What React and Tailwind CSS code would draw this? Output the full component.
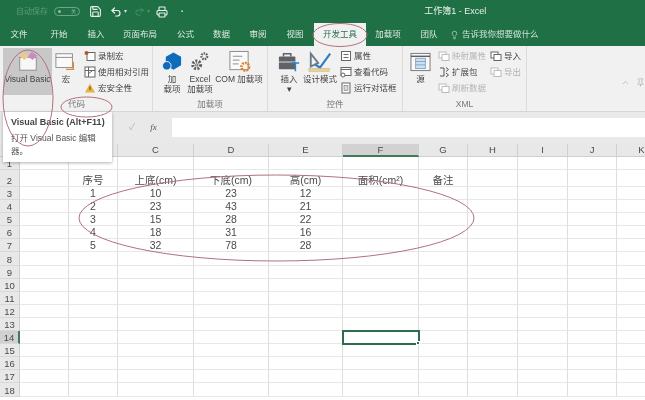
import React from "react";
import { Save, Undo2, Redo2, Printer, Lightbulb, ChevronUp, Pin } from "lucide-react";

const FONT = "font-['Liberation_Sans','Noto_Sans_CJK_SC',sans-serif]";

const tabs = [
  ["文件", "w-[38px]"], ["开始", "w-[42px]"], ["插入", "w-[32px]"], ["页面布局", "w-[56px]"],
  ["公式", "w-[35px]"], ["数据", "w-[37px]"], ["审阅", "w-[36px]"], ["视图", "w-[38px]"],
];

const Box = ({ children, className = "w-[12px] h-[12px]" }) => (
  <svg viewBox="0 0 12 12" className={className + " shrink-0"}>{children}</svg>
);

const IconRecord = () => (
  <Box><rect x="3" y="2.5" width="8" height="8" fill="#fff" stroke="#666" /><circle cx="2.5" cy="3" r="2" fill="#b5562e" /></Box>
);
const IconRelative = () => (
  <Box><rect x="1" y="1" width="10" height="10" fill="#fff" stroke="#666" /><path d="M1 4.5h10M4.5 1v10M4 8l4-3" stroke="#666" fill="none" /></Box>
);
const IconWarn = () => (
  <Box><path d="M6 1.5L11 10.5H1Z" fill="#e8b33a" /><path d="M6 4.5v3.5" stroke="#444" /></Box>
);
const IconProp = ({ c = "#666" }) => (
  <Box><rect x="1.5" y="1.5" width="9" height="9" fill="#fff" stroke={c} /><path d="M3.5 4.5h5M3.5 7.5h5" stroke={c} /></Box>
);
const IconCode = () => (
  <Box><rect x="1" y="1.5" width="10" height="8" fill="#fff" stroke="#666" /><path d="M1 3.5h10" stroke="#666" /><circle cx="3" cy="9" r="2" fill="#fff" stroke="#666" /></Box>
);
const IconDialog = () => (
  <Box><rect x="2" y="1" width="8" height="10" fill="#fff" stroke="#666" /><rect x="4" y="3.5" width="4" height="5" fill="#d8d8d8" stroke="#777" strokeWidth="0.6" /></Box>
);
const IconMap = ({ c = "#bbb" }) => (
  <Box><rect x="1" y="2" width="7" height="6" fill="#fff" stroke={c} /><rect x="4" y="4.5" width="7" height="6" fill="#fff" stroke={c} /></Box>
);
const IconPack = () => (
  <Box><path d="M2 2h4v8H2M8 1.5l2.5 2L8 5.5M8 7l2.5 2L8 11" fill="none" stroke="#555" /></Box>
);

const Small = ({ icon, children, muted }) => (
  <div className={"flex items-center h-[16px] gap-[2px] text-[8.5px] whitespace-nowrap " + (muted ? "text-[#b4b4b4]" : "text-[#444]")}>
    {icon}
    <span>{children}</span>
  </div>
);

const SmallList = ({ className = "", children }) => (
  <div className={"flex flex-col -mt-[1px] " + className}>{children}</div>
);

const Big = ({ w, icon, lines, className = "" }) => (
  <div className={"flex flex-col items-center shrink-0 text-[8.5px] leading-[10px] text-[#444] " + w + " " + className}>
    <div className="h-[25px] flex items-center justify-center">{icon}</div>
    {lines.map((l) => (
      <span key={l} className="whitespace-nowrap">{l}</span>
    ))}
  </div>
);

const Group = ({ w, label, children }) => (
  <div className={"flex flex-col shrink-0 h-full border-r border-[#dcdcdc] " + w}>
    <div className="flex flex-1 pt-[3px]">{children}</div>
    <div className="text-center text-[8.5px] leading-[10px] pb-[2px] text-[#777]">{label}</div>
  </div>
);

const VBIcon = () => (
  <svg viewBox="0 0 26 24" className="w-[24px] h-[22px]">
    <rect x="4" y="8" width="18" height="14" fill="#f7f7f7" stroke="#8a8a8a" />
    <path d="M8 2l6 5-5 4-6-5Z" fill="#efc98c" />
    <path d="M17 2l6 4-5 5-5-4Z" fill="#c78cc0" />
  </svg>
);
const MacroIcon = () => (
  <svg viewBox="0 0 24 24" className="w-[22px] h-[22px]">
    <rect x="1" y="3" width="18" height="15" fill="#fafafa" stroke="#8a8a8a" />
    <path d="M1 7h18" stroke="#8a8a8a" />
    <path d="M20 12v8h-8" fill="none" stroke="#e08a2e" strokeWidth="1.5" />
  </svg>
);
const Hexes = () => (
  <svg viewBox="0 0 22 22" className="w-[21px] h-[22px]">
    <path d="M12 1l8 4.5v9L12 19l-8-4.5v-9Z" fill="#0f6cbd" />
    <circle cx="5" cy="15" r="4.5" fill="#0f6cbd" stroke="#f1f1f1" />
  </svg>
);
const Gears = () => (
  <svg viewBox="0 0 22 24" className="w-[21px] h-[24px]" fill="none" stroke="#5f5f5f">
    <circle cx="15" cy="6" r="3" strokeWidth="2.4" strokeDasharray="1.6 1" />
    <circle cx="7" cy="15" r="4" strokeWidth="3.4" strokeDasharray="2 1.4" />
    <circle cx="7" cy="15" r="1.2" strokeWidth="1" />
  </svg>
);
const ComIcon = () => (
  <svg viewBox="0 0 24 24" className="w-[23px] h-[24px]">
    <rect x="2" y="1" width="19" height="19" fill="#fafafa" stroke="#8a8a8a" />
    <path d="M5 6h10M5 10h7M5 14h6" stroke="#8a8a8a" />
    <circle cx="18" cy="17" r="4" fill="none" stroke="#e0812b" strokeWidth="2.6" strokeDasharray="2 1" />
  </svg>
);
const InsertIcon = () => (
  <svg viewBox="0 0 24 24" className="w-[22px] h-[24px]">
    <rect x="1" y="6" width="18" height="14" rx="1" fill="#5f6266" />
    <path d="M6 6V3h8v3" fill="none" stroke="#5f6266" strokeWidth="1.6" />
    <path d="M1 12h18" stroke="#e8e8e8" />
    <path d="M15 13h8M19 13v9" stroke="#2f7fc1" strokeWidth="1.6" />
  </svg>
);
const DesignIcon = () => (
  <svg viewBox="0 0 26 24" className="w-[24px] h-[24px]">
    <path d="M3 3l8 10L3 17Z" fill="none" stroke="#6b7a88" strokeWidth="2" />
    <path d="M8 15l5 3L24 3" fill="none" stroke="#2f7fc1" strokeWidth="2.4" />
    <rect x="1" y="19" width="22" height="3" fill="#e9cf98" stroke="#c8a868" strokeWidth="0.5" />
  </svg>
);
const SourceIcon = () => (
  <svg viewBox="0 0 22 20" className="w-[21px] h-[20px]">
    <rect x="1" y="1" width="20" height="18" fill="#fafafa" stroke="#777" />
    <path d="M1 4h20" stroke="#555" strokeWidth="1.4" />
    <rect x="6" y="6" width="10" height="11" fill="#cfe0f0" stroke="#5f8db5" strokeWidth="0.7" />
    <path d="M6 9.5h10M6 13h10" stroke="#5f8db5" strokeWidth="0.7" />
  </svg>
);

const data = {
  2: ["序号", "上底(cm)", "下底(cm)", "高(cm)", "面积(cm²)", "备注"],
  3: ["1", "10", "23", "12"],
  4: ["2", "23", "43", "21"],
  5: ["3", "15", "28", "22"],
  6: ["4", "18", "31", "16"],
  7: ["5", "32", "78", "28"],
};
const letters = ["A", "B", "C", "D", "E", "F", "G", "H", "I", "J", "K"];
const rows = Array.from({ length: 18 }, (_, i) => i + 1);

function Sheet() {
  return (
    <div className="grid grid-cols-[20px_49px_49px_76px_75px_74px_76px_49px_50px_50px_49px_50px] grid-rows-[13px_13px_17px_repeat(16,13.1px)] bg-white text-[#4a4a4a] text-[10.5px]">
      <div className="bg-[#e6e6e6] border-b border-[#cfcfcf]" />
      {letters.map((l) => (
        <div
          key={l}
          className={
            "flex items-center justify-center text-[9.5px] leading-none border-r " +
            (l === "F"
              ? "bg-[#d2d2d2] border-b-2 border-b-[#3f7a5a] border-r-[#d0d0d0]"
              : "bg-[#e8e8e8] border-b border-b-[#cfcfcf] border-r-[#d0d0d0]")
          }
        >
          {l === "A" || l === "B" ? "" : l}
        </div>
      ))}
      {rows.map((r) => (
        <React.Fragment key={r}>
          <div
            className={
              "flex items-end justify-center text-[9.5px] leading-[11px] border-b border-[#d8d8d8] " +
              (r === 14 ? "bg-[#d0d0d0] border-r-2 border-r-[#3f7a5a]" : "bg-[#e8e8e8] border-r border-r-[#cfcfcf]")
            }
          >
            {r}
          </div>
          {letters.map((l, i) => {
            const v = data[r] && data[r][i - 1];
            const active = r === 14 && l === "F";
            return (
              <div
                key={l}
                className={
                  "relative flex items-end justify-center leading-[11px] whitespace-nowrap border-r border-b border-r-[#dedede] border-b-[#e8e8e8] " +
                  (active ? "outline-2 -outline-offset-1 outline-[#2f6b4d] z-10" : "")
                }
              >
                {v}
                {active && <span className="absolute -right-[2px] -bottom-[2px] w-[4px] h-[4px] bg-[#2f6b4d] border border-white" />}
              </div>
            );
          })}
        </React.Fragment>
      ))}
    </div>
  );
}

export default function App() {
  return (
    <div className={"relative w-[645px] h-[400px] overflow-hidden bg-white blur-[0.45px] " + FONT}>
      {/* title bar */}
      <div className="flex items-center h-[23px] bg-[#1f7145] text-white">
        <span className="ml-[16px] text-[8px] text-[#5d9a7b]">自动保存</span>
        <div className="ml-[6px] flex items-center justify-between w-[26px] h-[9px] rounded-full border border-[#6ea58a] px-[3px]">
          <span className="w-[3px] h-[3px] rounded-full bg-[#8fbca5]" />
          <span className="text-[5px] leading-none text-[#8fbca5]">关</span>
        </div>
        <Save className="ml-[9px] w-[13px] h-[13px] text-[#e8f1ec]" strokeWidth={2} />
        <Undo2 className="ml-[8px] w-[12px] h-[12px] text-[#e8f1ec]" strokeWidth={2.4} />
        <span className="ml-[2px] text-[6px] text-[#cfe0d6]">▾</span>
        <Redo2 className="ml-[7px] w-[11px] h-[11px] text-[#4f8f6d]" strokeWidth={2} />
        <span className="ml-[2px] text-[6px] text-[#4f8f6d]">▾</span>
        <Printer className="ml-[6px] w-[12px] h-[12px] text-[#e8f1ec]" strokeWidth={2.2} />
        <span className="ml-[13px] text-[6px] text-[#cfe0d6]">▪</span>
        <span className="ml-[241px] text-[9px] text-[#e8f1ec] whitespace-nowrap">工作簿1 - Excel</span>
      </div>

      {/* tabs */}
      <div className="flex h-[23px] bg-[#1f7145] text-[8.5px] text-[#dfeae4]">
        {tabs.map(([t, w]) => (
          <div key={t} className={"flex items-center justify-center " + w}>{t}</div>
        ))}
        <div className="flex items-center justify-center w-[52px] bg-[#f1f1f1] text-[#2b6e4a]">开发工具</div>
        <div className="flex items-center justify-center w-[44px]">加载项</div>
        <div className="flex items-center justify-center w-[38px]">团队</div>
        <div className="flex items-center gap-[3px] ml-[2px]">
          <Lightbulb className="w-[9px] h-[10px]" strokeWidth={1.6} />
          <span className="whitespace-nowrap text-[#cfe0d6]">告诉我你想要做什么</span>
        </div>
      </div>

      {/* ribbon */}
      <div className="flex h-[66px] bg-[#f1f1f1] border-b border-[#d6d6d6]">
        <Group w="w-[153px]" label={<span className="ml-[1px]">代码</span>}>
          <div className="ml-[3px] -mt-[1px] w-[49px] h-[47px] bg-[#c8c8c8] flex flex-col items-center text-[8.5px] text-[#444] shrink-0">
            <div className="h-[26px] flex items-center"><VBIcon /></div>
            <span className="whitespace-nowrap leading-[10px]">Visual Basic</span>
          </div>
          <Big w="w-[28px]" icon={<MacroIcon />} lines={["宏"]} />
          <SmallList className="ml-[4px]">
            <Small icon={<IconRecord />}>录制宏</Small>
            <Small icon={<IconRelative />}>使用相对引用</Small>
            <Small icon={<IconWarn />}>宏安全性</Small>
          </SmallList>
        </Group>
        <Group w="w-[115px]" label="加载项">
          <Big w="w-[34px]" icon={<Hexes />} lines={["加", "载项"]} className="ml-[2px]" />
          <Big w="w-[22px]" icon={<Gears />} lines={["Excel", "加载项"]} />
          <Big w="w-[56px]" icon={<ComIcon />} lines={["COM 加载项"]} />
        </Group>
        <Group w="w-[135px]" label="控件">
          <Big w="w-[38px]" icon={<InsertIcon />} lines={["插入", "▾"]} className="ml-[2px]" />
          <Big w="w-[24px]" icon={<DesignIcon />} lines={["设计模式"]} />
          <SmallList className="ml-[8px]">
            <Small icon={<IconProp />}>属性</Small>
            <Small icon={<IconCode />}>查看代码</Small>
            <Small icon={<IconDialog />}>运行对话框</Small>
          </SmallList>
        </Group>
        <Group w="w-[124px]" label="XML">
          <Big w="w-[35px]" icon={<SourceIcon />} lines={["源"]} />
          <SmallList className="w-[52px]">
            <Small muted icon={<IconMap />}>映射属性</Small>
            <Small icon={<IconPack />}>扩展包</Small>
            <Small muted icon={<IconMap />}>刷新数据</Small>
          </SmallList>
          <SmallList>
            <Small icon={<IconMap c="#666" />}>导入</Small>
            <Small muted icon={<IconMap />}>导出</Small>
          </SmallList>
        </Group>
        <div className="flex-1 flex items-center justify-end gap-[6px] pt-[8px] text-[#b0b0b0]">
          <ChevronUp className="w-[9px] h-[9px]" />
          <Pin className="w-[9px] h-[9px]" />
        </div>
      </div>

      {/* formula bar */}
      <div className="flex flex-col bg-[#e9e9e9] h-[32px] pt-[6px]">
        <div className="flex h-[19px]">
          <div className="w-[172px] flex items-center">
            <span className="ml-[129px] text-[9px] text-[#b5b5b5]">✓</span>
            <span className="ml-[15px] text-[9px] italic font-['Liberation_Serif',serif] text-[#555]">fx</span>
          </div>
          <div className="flex-1 bg-white" />
        </div>
      </div>

      <Sheet />

      {/* tooltip */}
      <div className="absolute left-[3px] top-[112px] w-[109px] h-[50px] z-20 bg-white shadow-[0_1px_3px_rgba(0,0,0,0.3)] px-[8px] pt-[4px] text-[8.5px] leading-[13px] text-[#555]">
        <div className="font-bold text-[9px] whitespace-nowrap mb-[3px] text-[#444]">Visual Basic (Alt+F11)</div>
        <div>打开 Visual Basic 编辑器。</div>
      </div>

      {/* hand-drawn ovals */}
      <svg viewBox="0 0 645 400" className="absolute inset-0 w-[645px] h-[400px] z-30 pointer-events-none" fill="none" stroke="#b0727a" strokeWidth="1">
        <ellipse cx="28" cy="98" rx="25" ry="48" />
        <ellipse cx="86.5" cy="107" rx="25.5" ry="10" />
        <ellipse cx="340" cy="35" rx="27" ry="11.5" />
        <ellipse cx="276.5" cy="218" rx="197.5" ry="43" />
      </svg>
    </div>
  );
}
